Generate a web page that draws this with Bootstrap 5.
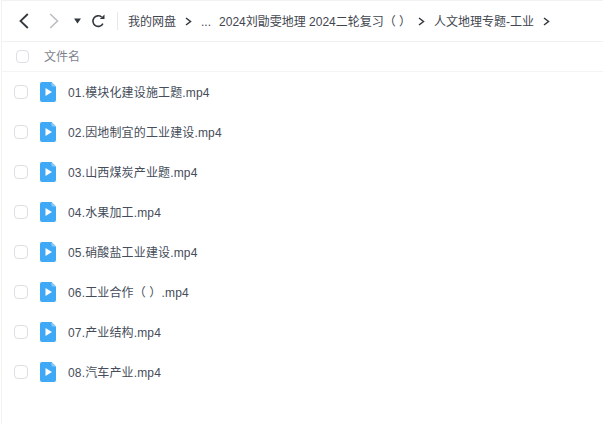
<!DOCTYPE html>
<html lang="zh-CN">
<head>
  <meta charset="UTF-8">
  <title>人文地理专题-工业</title>
  <link href="https://cdn.jsdelivr.net/npm/bootstrap@5.3.3/dist/css/bootstrap.min.css" rel="stylesheet">
  <style>
    html, body { height: 100%; overflow: hidden; }
    body { background: #fff; color: #454d5a; font-family: "Liberation Sans", "Noto Sans CJK SC", sans-serif; font-size: 12px; }
    .disk-page { height: 424px; margin-left: 1px; border-left: 1px solid #f1f2f4; border-top: 1px solid #f1f2f4; }
    .path-bar { height: 41px; border-bottom: 1px solid #f0f1f3; padding-left: 17px; color: #3f4650; white-space: nowrap; }
    .nav-ico { display: block; flex: none; }
    .nav-fwd { margin-left: 20px; }
    .nav-more { margin-left: 15px; }
    .nav-reload { margin-left: 10px; }
    .bar-sep { width: 1px; height: 18px; background: #e6e8eb; margin: 0 10px 0 12px; }
    .crumb-gt { margin: 0 9px; flex: none; }
    .crumb-gt-tight { margin-left: 7px; }
    .head-row { height: 30px; border-bottom: 1px solid #f3f4f6; color: #7d838c; padding-left: 14px; }
    .file-row { height: 40px; padding-left: 12px; }
    .tick { width: 14px; height: 14px; border: 1px solid #dcdfe3; border-radius: 4px; background: #fff; flex: none; }
    .file-ico { margin: 0 12px; flex: none; display: block; }
    .head-row .tick { width: 13px; height: 13px; margin-right: 15px; }
    .file-name { letter-spacing: .15px; padding-top: 2px; }
    .head-name { padding-top: 1px; }
    .crumb-txt { padding-top: 1px; }
  </style>
</head>
<body>

<div class="disk-page">
  <!-- path bar -->
  <div class="path-bar d-flex align-items-center">
    <svg class="nav-ico" width="10" height="16" viewBox="0 0 10 16"><path d="M8.800 1 1.500 8l7.300 7" fill="none" stroke="#33383f" stroke-width="1.800"/></svg>
    <svg class="nav-ico nav-fwd" width="10" height="16" viewBox="0 0 10 16"><path d="M1.200 1 8.500 8l-7.300 7" fill="none" stroke="#b9bcc1" stroke-width="1.500"/></svg>
    <svg class="nav-ico nav-more" width="7" height="6" viewBox="0 0 7 6"><path d="M0 .5h7L3.500 5.500z" fill="#33383f"/></svg>
    <svg class="nav-ico nav-reload" width="14" height="14" viewBox="0 0 14 14"><path d="M11.900 9.600A5.300 5.300 0 1 1 10.600 3" fill="none" stroke="#33383f" stroke-width="1.600"/><path d="M8.800 5h4.700V.5z" fill="#33383f"/></svg>
    <span class="bar-sep"></span>
    <span class="crumb-txt">我的网盘</span>
    <svg class="crumb-gt" width="7" height="9" viewBox="0 0 7 9"><path d="M1 1l4.500 3.500L1 8" fill="none" stroke="#33383f" stroke-width="1.500"/></svg>
    <span class="crumb-txt">...</span>
    <span class="crumb-txt ms-2">2024刘勖雯地理 2024二轮复习（ ）</span>
    <svg class="crumb-gt crumb-gt-tight" width="7" height="9" viewBox="0 0 7 9"><path d="M1 1l4.500 3.500L1 8" fill="none" stroke="#33383f" stroke-width="1.500"/></svg>
    <span class="crumb-txt">人文地理专题-工业</span>
    <svg class="crumb-gt" width="7" height="9" viewBox="0 0 7 9"><path d="M1 1l4.500 3.500L1 8" fill="none" stroke="#33383f" stroke-width="1.500"/></svg>
  </div>

  <!-- column header -->
  <div class="head-row d-flex align-items-center"><span class="tick"></span><span class="head-name">文件名</span></div>

  <!-- rows get filled below -->
  <div id="fileList"></div>
</div>

<script src="https://cdn.jsdelivr.net/npm/bootstrap@5.3.3/dist/js/bootstrap.bundle.min.js"></script>
<script>
const files = ['01.模块化建设施工题.mp4', '02.因地制宜的工业建设.mp4', '03.山西煤炭产业题.mp4', '04.水果加工.mp4',
  '05.硝酸盐工业建设.mp4', '06.工业合作（ ）.mp4', '07.产业结构.mp4', '08.汽车产业.mp4'];
const icon = '<svg class="file-ico" width="16" height="20" viewBox="0 0 16 20"><path d="M2 0h9.500L16 4.500V18a2 2 0 0 1-2 2H2a2 2 0 0 1-2-2V2a2 2 0 0 1 2-2z" fill="#40a9f5"/><path d="M11.500 0 16 4.500h-3a1.500 1.500 0 0 1-1.500-1.500z" fill="#8ccbf9"/><path d="M5.500 6v8l6.500-4z" fill="#fff"/></svg>';
document.getElementById('fileList').innerHTML = files.map(name =>
  `<div class="file-row d-flex align-items-center"><span class="tick"></span>${icon}<span class="file-name">${name}</span></div>`
).join('');
</script>

</body>
</html>
